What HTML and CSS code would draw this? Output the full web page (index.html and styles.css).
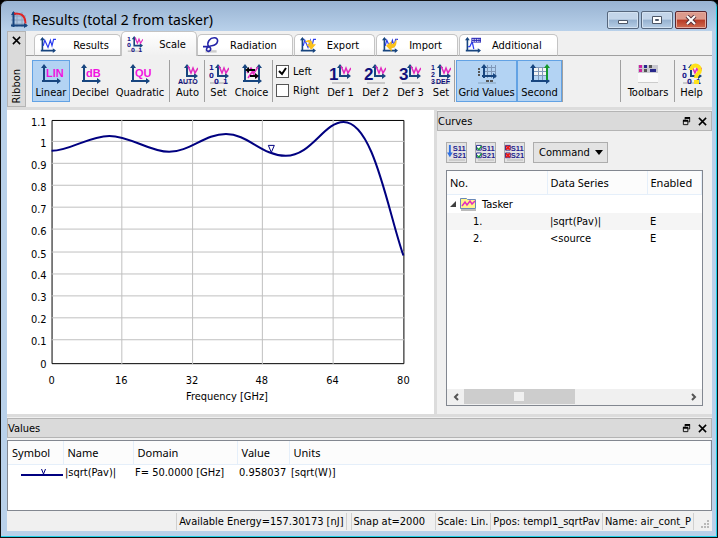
FILE: index.html
```html
<!DOCTYPE html>
<html lang="en">
<head>
    <meta charset="UTF-8">
    <meta name="viewport" content="width=device-width, initial-scale=1.0">
    <title>Results (total 2 from tasker)</title>
    <link rel="stylesheet" href="styles.css">
</head>
<body>
    <svg class="defs" aria-hidden="true">
        <defs>
            <!-- shared axes with arrow heads -->
            <symbol id="axes" viewBox="0 0 20 20">
                <path d="M3 18V2M1 17h17" stroke="#17457f" stroke-width="2" fill="none"/>
                <path d="M3 0L0 4h6zM20 17l-4-3v6z" fill="#17457f"/>
            </symbol>
            <symbol id="mini" viewBox="0 0 20 20">
                <path d="M1 19h18" stroke="#c9c9c9" stroke-width="2"/>
                <path d="M9 13V2M8 12h10" stroke="#17457f" stroke-width="2" fill="none"/>
                <path d="M9 0L6 4h6zM20 12l-4-3v6z" fill="#17457f"/>
                <path d="M10 2l3 7 2-5 2 5 3-5" stroke="#e22bc0" stroke-width="1.5" fill="none"/>
            </symbol>
            <symbol id="scale" viewBox="0 0 20 20">
                <use href="#mini"/>
                <g fill="#20208c" font-family="DejaVu Sans" font-size="7" font-weight="bold"><text x="0" y="6">1</text><text x="0" y="14">0</text><text x="5" y="20">0</text><text x="14" y="20">1</text></g>
            </symbol>
            <symbol id="wave" viewBox="0 0 20 20">
                <use href="#axes"/>
                <path d="M4 11l2-7 4 9 3-9 2 7 2-8h3" stroke="#2a3cf0" stroke-width="1.5" fill="none"/>
            </symbol>
            <symbol id="float" viewBox="0 0 10 10">
                <path d="M3.5 3V1.5h5v4H7M1.5 4.5h5v4h-5z" stroke="#000" fill="none"/>
                <path d="M3 1h6M1 4h6" stroke="#000" stroke-width="2"/>
            </symbol>
            <symbol id="cross" viewBox="0 0 10 10">
                <path d="M1 1l8 8M9 1l-8 8" stroke="#000" stroke-width="1.7"/>
            </symbol>
            <symbol id="s-params" viewBox="0 0 20 18">
                <path d="M2 17h17" stroke="#ccc" stroke-width="2"/>
                <g fill="#24248f" font-family="Liberation Sans" font-size="8" font-weight="bold"><text x="6" y="7">S11</text><text x="6" y="15">S21</text></g>
            </symbol>
        </defs>
    </svg>

    <div class="window">
        <header class="titlebar">
            <svg class="app-icon" viewBox="0 0 18 18">
                <path d="M1 5h15M1 9h15M1 13h15M7 1v15M12 1v15" stroke="#8aa0bd"/>
                <path d="M3.5 1v15M1 14.5h16" stroke="#17457f" stroke-width="2"/>
                <path d="M3.5 0L1 4h5zM18 14.5L14 12v5z" fill="#17457f"/>
                <path d="M4 2.5c7 0 11 1 11.5 10" stroke="#e02424" stroke-width="2" fill="none"/>
            </svg>
            <h1>Results (total 2 from tasker)</h1>
            <div class="window-buttons">
                <button aria-label="Minimize"><svg viewBox="0 0 12 10"><path d="M1.5 5.5h9v3h-9z" fill="#fff" stroke="#4c5666"/></svg></button>
                <button aria-label="Maximize"><svg viewBox="0 0 12 10"><path d="M1.5 1.5h9v7h-9z" fill="#fff" stroke="#4c5666"/><path d="M4.5 4.5h3v1h-3z" fill="#8fabc8" stroke="#4c5666"/></svg></button>
                <button class="close" aria-label="Close"><svg viewBox="0 0 12 10"><path d="M2 1l8 8M10 1l-8 8" stroke="#57323a" stroke-width="4"/><path d="M2 1l8 8M10 1l-8 8" stroke="#fff" stroke-width="2"/></svg></button>
            </div>
        </header>

        <div class="content">
            <section class="ribbon">
                <div class="ribbon-handle">
                    <button aria-label="Close ribbon"><svg class="glyph"><use href="#cross"/></svg></button>
                    <span>Ribbon</span>
                </div>
                <div class="ribbon-body">
                    <nav class="tabs">
                        <button><svg><use href="#wave"/></svg><span>Results</span></button>
                        <button class="active"><svg><use href="#scale"/></svg><span>Scale</span></button>
                        <button class="wide"><svg viewBox="0 0 20 20"><path d="M3 18h14" stroke="#ccc" stroke-width="3"/><path d="M0 12h7C4 6 9 1 14 1c7 0 5 9-3 10-8 1-8 7-4 7 4-1 3-7-1-5" stroke="#2424a8" stroke-width="2" fill="none"/></svg><span>Radiation</span></button>
                        <button class="wide"><svg viewBox="0 0 20 20"><use href="#wave"/><path d="M6 6c5-4 9-3 10 3h4l-6 7-6-7h4c0-2-3-3-6-3z" fill="#fbc21c"/></svg><span>Export</span></button>
                        <button class="wide"><svg viewBox="0 0 20 20"><use href="#wave"/><path d="M18 2c1 7-1 12-6 12v4l-7-7 7-6v4c3 0 5-3 6-7z" fill="#fbc21c"/></svg><span>Import</span></button>
                        <button class="wide"><svg viewBox="0 0 20 20"><use href="#axes"/><path d="M4 12h2l3-6 2 9" stroke="#2a3cf0" stroke-width="1.5" fill="none"/><path d="M8 1h12v6h-12z" fill="#2c2cb8"/><path d="M9 3h10M9 5.5h10" stroke="#fff" stroke-dasharray="2 1"/></svg><span>Additional</span></button>
                    </nav>
                    <div class="tools">
                        <button class="on"><svg viewBox="0 0 20 20"><use href="#axes"/><text class="magenta" x="5" y="13">LIN</text></svg><span>Linear</span></button>
                        <button><svg viewBox="0 0 20 20"><use href="#axes"/><text class="magenta" x="5" y="13">dB</text></svg><span>Decibel</span></button>
                        <button><svg viewBox="0 0 20 20"><use href="#axes"/><text class="magenta" x="5" y="13">QU</text></svg><span>Quadratic</span></button>
                        <i class="sep"></i>
                        <button><svg viewBox="0 0 20 20"><use href="#mini"/><text class="navy tiny" x="0" y="20">AUTO</text></svg><span>Auto</span></button>
                        <i class="sep"></i>
                        <button><svg><use href="#scale"/></svg><span>Set</span></button>
                        <button><svg viewBox="0 0 20 20"><use href="#axes"/><path d="M17 16V3" stroke="#17457f" stroke-width="2"/><path d="M17 0l-3 4h6z" fill="#17457f"/><path d="M5 9l4-5 3 5 4-6M6 14l4-6 5 6" stroke="#e22bc0" stroke-width="1.5" fill="none"/><path d="M6 6h7M8 12h6" stroke="#000" stroke-width="2"/><path d="M3 6l4-3v6zM17 12l-4-3v6z"/></svg><span>Choice</span></button>
                        <i class="sep"></i>
                        <div class="checks">
                            <label><input type="checkbox" checked>Left</label>
                            <label><input type="checkbox">Right</label>
                        </div>
                        <button><svg viewBox="0 0 20 20"><use href="#mini"/><text class="navy" x="-2" y="16">1</text></svg><span>Def 1</span></button>
                        <button><svg viewBox="0 0 20 20"><use href="#mini"/><text class="navy" x="-2" y="16">2</text></svg><span>Def 2</span></button>
                        <button><svg viewBox="0 0 20 20"><use href="#mini"/><text class="navy" x="-2" y="16">3</text></svg><span>Def 3</span></button>
                        <button><svg viewBox="0 0 20 20"><use href="#mini"/><g class="navy tiny"><text x="0" y="6">1</text><text x="0" y="13">2</text><text x="0" y="20">3</text><text x="5" y="20">DEF</text></g></svg><span>Set</span></button>
                        <i class="sep"></i>
                        <button class="on"><svg viewBox="0 0 20 20"><path d="M1 19h18" stroke="#9dbbd8" stroke-width="2"/><path d="M6 3.5h13M6 7.5h13M10.5 1v13M14.5 1v13M18.5 1v13" stroke="#8098b8"/><path d="M7 14V2M5 12h13" stroke="#17457f" stroke-width="2"/><path d="M7 0L4 4h6zM20 12l-4-3v6z" fill="#17457f"/><path d="M1 5h2M1 8h2M1 11h2M9 17h3M13 17h3" stroke="#555" stroke-width="2"/></svg><span>Grid Values</span></button>
                        <button class="on"><svg viewBox="0 0 20 20"><path d="M4 3.5h13v8H4M4 7.5h13M8.5 3v13M12.5 3v13" stroke="#8098b8" fill="#f4f4f4"/><use href="#axes"/><path d="M17 16V4" stroke="#149a2c" stroke-width="2"/><path d="M17 0l-3 4h6z" fill="#149a2c"/></svg><span>Second</span></button>
                        <i class="sep"></i>
                        <span></span>
                        <i class="sep"></i>
                        <button><svg viewBox="0 0 20 20"><path d="M0 1h20v8H0z" fill="#c8c8d0"/><path d="M0 9h20v10H0z" fill="#fafafa"/><path d="M0 18.5h20" stroke="#ccc"/><path d="M1 2.5h3M1 6.5h3" stroke="#d020a0" stroke-width="3"/><path d="M6 2.5h3M12 6.5h6" stroke="#28288c" stroke-width="3"/><path d="M11 2.5h3M6 6.5h3" stroke="#555" stroke-width="3"/></svg><span>Toolbars</span></button>
                        <i class="sep"></i>
                        <button><svg viewBox="0 0 20 20"><use href="#scale"/><path d="M9 6c0-6 9-6 9 0 0 4-4 3-4 8" stroke="#ffe11a" stroke-width="4" fill="none"/><path d="M12 16h5v4h-5z" fill="#ffe11a"/></svg><span>Help</span></button>
                    </div>
                </div>
            </section>

            <main class="workspace">
                <section class="plot">
                    <svg viewBox="0 0 427 305" role="img" aria-label="|sqrt(Pav)| against frequency">
                        <path class="frame" d="M44.5 10.5h353v244h-353z"/>
                        <path class="grid" d="M44 31.5h354M44 53.5h354M44 75.5h354M44 97.5h354M44 119.5h354M44 142.5h354M44 164.5h354M44 186.5h354M44 208.5h354M44 230.5h354M114.5 10v245M185.5 10v245M255.5 10v245M326.5 10v245"/>
                        <path class="curve" d="M44 41C63 41 81 26 102 26C123 26 142 42 162 42S198 24 219 24C241 24 255 46 279 46C305 46 317 12 337 12C367 12 381 100 397 146"/>
                        <path class="marker" d="M261.5 35.5h6l-3 7z"/>
                        <g class="y-labels">
                            <text x="39" y="16">1.1</text>
                            <text x="39" y="37">1</text>
                            <text x="39" y="59">0.9</text>
                            <text x="39" y="81">0.8</text>
                            <text x="39" y="103">0.7</text>
                            <text x="39" y="125">0.6</text>
                            <text x="39" y="148">0.5</text>
                            <text x="39" y="170">0.4</text>
                            <text x="39" y="192">0.3</text>
                            <text x="39" y="214">0.2</text>
                            <text x="39" y="236">0.1</text>
                            <text x="39" y="259">0</text>
                        </g>
                        <g class="x-labels">
                            <text x="44" y="275">0</text>
                            <text x="114" y="275">16</text>
                            <text x="185" y="275">32</text>
                            <text x="255" y="275">48</text>
                            <text x="326" y="275">64</text>
                            <text x="397" y="275">80</text>
                            <text x="220" y="291">Frequency [GHz]</text>
                        </g>
                    </svg>
                </section>

                <aside class="curves">
                    <div class="dock-title">
                        <h2>Curves</h2>
                        <button aria-label="Float curves"><svg class="glyph"><use href="#float"/></svg></button>
                        <button aria-label="Close curves"><svg class="glyph"><use href="#cross"/></svg></button>
                    </div>
                    <div class="curves-body">
                        <div class="curve-tools">
                            <button class="square" aria-label="Sort"><svg viewBox="0 0 20 18"><use href="#s-params"/><path d="M3 1v9" stroke="#2f6fe0" stroke-width="2"/><path d="M0 9h6l-3 5z" fill="#2f6fe0"/></svg></button>
                            <button class="square" aria-label="Enable all"><svg viewBox="0 0 20 18"><use href="#s-params"/><path d="M.5 1.5h5v5h-5zM.5 9.5h5v5h-5z" fill="#fff" stroke="#24248f"/><path d="M1 4l2 2 3-4M1 12l2 2 3-4" stroke="#1c9c3c" stroke-width="1.5" fill="none"/></svg></button>
                            <button class="square" aria-label="Disable all"><svg viewBox="0 0 20 18"><use href="#s-params"/><path d="M.5 1.5h5v5h-5zM.5 9.5h5v5h-5z" fill="#fff" stroke="#24248f"/><path d="M1 2l4 4M5 2L1 6M1 10l4 4M5 10l-4 4" stroke="#e81818" stroke-width="2"/></svg></button>
                            <button class="command">Command <svg viewBox="0 0 8 5"><path d="M0 0h8L4 5z"/></svg></button>
                        </div>
                        <div class="tree">
                            <table>
                                <thead>
                                    <tr><th>No.</th><th>Data Series</th><th>Enabled</th></tr>
                                </thead>
                                <tbody>
                                    <tr class="group"><td colspan="3"><svg class="arrow" viewBox="0 0 6 6"><path d="M6 0v6H0z" fill="#404040"/></svg><svg class="folder" viewBox="0 0 16 14"><path d="M1 13h15" stroke="#bbb" stroke-width="2"/><path d="M.5 11.5v-10h6l1 1h8v9z" fill="#fff48c" stroke="#6888b8"/><path d="M2 9l3-4 2 3 3-4 2 3 3-3" stroke="#e22bc0" stroke-width="1.5" fill="none"/></svg>Tasker</td></tr>
                                    <tr class="alt"><td>1.</td><td>|sqrt(Pav)|</td><td>E</td></tr>
                                    <tr><td>2.</td><td>&lt;source</td><td>E</td></tr>
                                </tbody>
                            </table>
                            <div class="scrollbar">
                                <button aria-label="Scroll left"><svg viewBox="0 0 6 8"><path d="M5 1L2 4l3 3"/></svg></button>
                                <div class="track"><div class="thumb"></div></div>
                                <button aria-label="Scroll right"><svg viewBox="0 0 6 8"><path d="M1 1l3 3-3 3"/></svg></button>
                            </div>
                        </div>
                    </div>
                </aside>
            </main>

            <section class="values">
                <div class="dock-title">
                    <h2>Values</h2>
                    <button aria-label="Float values"><svg class="glyph"><use href="#float"/></svg></button>
                    <button aria-label="Close values"><svg class="glyph"><use href="#cross"/></svg></button>
                </div>
                <div class="values-box">
                    <table>
                        <thead>
                            <tr><th>Symbol</th><th>Name</th><th>Domain</th><th>Value</th><th>Units</th></tr>
                        </thead>
                        <tbody>
                            <tr>
                                <td><svg class="symbol" viewBox="0 0 42 8"><path d="M0 6h42" stroke="#000080" stroke-width="2"/><path d="M20.5 0l2 5 2-5" stroke="#000080" fill="none"/></svg></td>
                                <td>|sqrt(Pav)|</td>
                                <td>F= 50.0000 [GHz]</td>
                                <td>0.958037</td>
                                <td>[sqrt(W)]</td>
                            </tr>
                        </tbody>
                    </table>
                </div>
            </section>

            <footer class="statusbar">
                <span class="energy">Available Energy=157.30173 [nJ]</span>
                <span class="snap">Snap at=2000</span>
                <span>Scale: Lin.</span>
                <span>Ppos: templ1_sqrtPav</span>
                <span>Name: air_cont_P</span>
                <svg class="grip" viewBox="0 0 8 8"><path d="M6 1h2M3 4h2M6 4h2M0 7h2M3 7h2M6 7h2" stroke="#b8b8b8" stroke-width="2"/></svg>
            </footer>
        </div>
    </div>
</body>
</html>
```

FILE: styles.css
```css
* {
    box-sizing: border-box;
}
body {
    margin: 0;
    background-color: #000;
    font-family: "DejaVu Sans Condensed", "Noto Sans", sans-serif;
    font-size: 11px;
    color: #000;
}
button {
    font: inherit;
    color: inherit;
    padding: 0;
    border: none;
    background: none;
}
h1, h2 {
    margin: 0;
    font-weight: normal;
}
svg {
    display: block;
    flex: none;
}
.defs {
    position: absolute;
    width: 0;
    height: 0;
}
.window {
    display: flex;
    flex-direction: column;
    height: 100vh;
    padding: 0 5px 6px 6px;
    border: 1px solid #111;
    border-radius: 7px 7px 0 0;
    background: #b9d1ea linear-gradient(#98b3d2, #b9d1ea 30px);
    box-shadow: inset -1px -1px #20d0e8;
}
.titlebar {
    display: flex;
    align-items: center;
    gap: 4px;
    height: 30px;
    padding: 8px 5px 0 3px;
}
.titlebar h1 {
    flex: 1;
    font-family: "Noto Sans", sans-serif;
    font-size: 14px;
    line-height: 20px;
}
.app-icon {
    width: 18px;
    height: 18px;
}
.window-buttons {
    display: flex;
    gap: 2px;
}
.window-buttons button {
    display: grid;
    place-items: center;
    width: 32px;
    height: 18px;
    border: 1px solid #56677d;
    border-radius: 2px;
    background: linear-gradient(#c3d5e9 45%, #95b1cf 50%, #b7cee6);
    box-shadow: inset 0 0 0 1px #d3e2f1;
}
.window-buttons .close {
    border-color: #5a2730;
    background: linear-gradient(#dc9a8c 45%, #b83a25 50%, #cf6b50);
    box-shadow: inset 0 0 0 1px #e5aca0;
}
.window-buttons svg {
    width: 12px;
    height: 10px;
}
.content {
    flex: 1;
    display: flex;
    flex-direction: column;
    min-height: 0;
    background-color: #f0f0f0;
}
.glyph {
    width: 9px;
    height: 9px;
}

/* ribbon */
.ribbon {
    display: flex;
    height: 79px;
    border-bottom: 3px solid #dcdcdc;
}
.ribbon-handle {
    display: flex;
    flex-direction: column;
    justify-content: space-between;
    align-items: center;
    width: 19px;
    padding: 4px 0 2px;
    border: 1px solid #b4b4b4;
    background-color: #dadada;
}
.ribbon-handle span {
    writing-mode: vertical-rl;
    transform: rotate(180deg);
}
.ribbon-body {
    flex: 1;
}
.tabs {
    display: flex;
    align-items: flex-end;
    height: 25px;
    padding-left: 8px;
    background: linear-gradient(#a0a0a0, #a0a0a0) bottom / 100% 1px no-repeat;
}
.tabs button {
    display: flex;
    align-items: center;
    width: 87px;
    height: 22px;
    padding: 0 5px;
    border: 1px solid #c4c4c4;
    border-bottom-color: #a0a0a0;
    border-radius: 5px 5px 0 0;
    background: linear-gradient(#fff 60%, #f6f6f6);
}
.tabs .wide {
    width: auto;
    margin-right: 1px;
    padding-right: 15px;
}
.tabs .active {
    width: 76px;
    height: 25px;
    border-bottom: none;
    background: linear-gradient(#fff, #f0f0f0);
}
.tabs svg {
    width: 16px;
    height: 16px;
}
.tabs span {
    flex: 1;
    padding-left: 11px;
}
.tools {
    display: grid;
    grid-template-columns: 38px 41px 58px 2px 33px 2px 25px 41px 2px 49px 35px 35px 35px 26px 2px 61px 45px 2px 1fr 2px 52px 2px 31px;
    height: 42px;
    margin: 4px 5px 0 6px;
}
.tools button {
    display: flex;
    flex-direction: column;
    align-items: center;
    gap: 1px;
    padding-top: 3px;
    border: 1px solid transparent;
    white-space: nowrap;
}
.tools button span {
    line-height: 16px;
}
.tools .on {
    border-color: #62a2e4;
    background-color: #b3d3f3;
}
.tools svg {
    width: 20px;
    height: 20px;
    overflow: visible;
}
.sep {
    width: 1px;
    background-color: #a0a0a0;
}
.magenta {
    fill: #f012e0;
    font: bold 11px "Liberation Sans", sans-serif;
}
.navy {
    fill: #10107c;
    font: bold 17px "Liberation Sans", sans-serif;
}
.tiny {
    font-size: 7px;
}
.checks {
    display: flex;
    flex-direction: column;
    gap: 5px;
    padding: 4px 0 0 2px;
}
.checks label {
    display: flex;
    align-items: center;
    gap: 4px;
    height: 14px;
}
.checks input {
    appearance: none;
    width: 13px;
    height: 13px;
    margin: 0;
    border: 1px solid #555;
    background-color: #fff;
}
.checks input:checked {
    background: #fff url("data:image/svg+xml,%3Csvg xmlns='http://www.w3.org/2000/svg' viewBox='0 0 11 11'%3E%3Cpath d='M2 5l3 3 4-6' stroke='%23000' stroke-width='2' fill='none'/%3E%3C/svg%3E");
}

/* plot and curves */
.workspace {
    flex: 1;
    display: grid;
    grid-template-columns: minmax(0, 1fr) 275px;
    min-height: 0;
    border-bottom: 3px solid #dcdcdc;
}
.plot {
    min-height: 0;
    border-right: 3px solid #dcdcdc;
    background-color: #fff;
}
.plot svg {
    width: 100%;
    height: 100%;
}
.frame {
    fill: none;
    stroke: #000;
}
.grid {
    stroke: #c0c0c0;
}
.curve {
    fill: none;
    stroke: #000080;
    stroke-width: 2;
}
.marker {
    fill: #fff;
    stroke: #000080;
}
.y-labels {
    text-anchor: end;
}
.x-labels {
    text-anchor: middle;
}
.curves {
    display: flex;
    flex-direction: column;
    padding-top: 1px;
}
.dock-title {
    display: flex;
    align-items: center;
    gap: 7px;
    height: 20px;
    padding: 0 4px 0 0;
    border: 1px solid #b4b4b4;
    background-color: #dadada;
}
.dock-title h2 {
    flex: 1;
    font-size: 11px;
}
.curves-body {
    flex: 1;
    display: flex;
    flex-direction: column;
    gap: 7px;
    padding: 11px 9px 8px;
}
.curve-tools {
    display: flex;
    gap: 8px;
}
.curve-tools button {
    height: 21px;
    border: 1px solid #adadad;
    background-color: #e3e3e3;
}
.square {
    width: 21px;
}
.square svg {
    width: 19px;
    height: 17px;
}
.curve-tools .command {
    display: flex;
    align-items: center;
    gap: 5px;
    padding: 0 4px 0 5px;
}
.command svg {
    width: 8px;
    height: 5px;
}
.tree {
    flex: 1;
    display: flex;
    flex-direction: column;
    justify-content: space-between;
    border: 1px solid #828790;
    background-color: #fff;
}
table {
    width: 100%;
    table-layout: fixed;
    border-collapse: collapse;
}
th {
    height: 23px;
    padding: 0 4px;
    border-right: 1px solid #e5effa;
    border-bottom: 1px solid #e5effa;
    background-color: #fcfcfc;
    font-family: "Noto Sans", sans-serif;
    font-weight: normal;
    text-align: left;
}
td {
    height: 17px;
    padding: 0 4px;
    white-space: nowrap;
}
.tree th {
    width: 100px;
    padding: 0 3px;
}
.tree th:last-child {
    width: auto;
}
.tree td {
    padding: 0 3px;
}
.tree td:first-child {
    padding-left: 26px;
}
.tree .group td {
    display: flex;
    align-items: center;
    height: 18px;
    padding: 1px 0 0 3px;
}
.arrow {
    width: 6px;
    height: 6px;
}
.folder {
    width: 16px;
    height: 14px;
    margin: 0 6px 0 4px;
}
.alt {
    background-color: #f5f5f5;
}
.scrollbar {
    display: flex;
    height: 16px;
    background-color: #f0f0f0;
}
.scrollbar button {
    display: grid;
    place-items: center;
    width: 17px;
}
.scrollbar svg {
    width: 6px;
    height: 8px;
    fill: none;
    stroke: #555;
    stroke-width: 2;
}
.track {
    flex: 1;
}
.thumb {
    width: 50%;
    height: 15px;
    background: linear-gradient(#f0f0f0, #f0f0f0) center / 10px 9px no-repeat #cdcdcd;
}

/* values */
.values {
    padding-top: 1px;
}
.values .dock-title {
    margin-bottom: 2px;
}
.values-box {
    height: 71px;
    border: 1px solid #828790;
    background-color: #fff;
}
.values th:nth-child(1) {
    width: 55px;
}
.values th:nth-child(2) {
    width: 70px;
}
.values th:nth-child(3) {
    width: 104px;
}
.values th:nth-child(4) {
    width: 52px;
}
.values td {
    padding: 0 2px;
}
.values td:first-child {
    padding: 0;
}
.symbol {
    width: 42px;
    height: 8px;
    margin-left: auto;
}

/* status bar */
.statusbar {
    display: flex;
    justify-content: flex-end;
    align-items: center;
    height: 20px;
    padding-right: 3px;
}
.statusbar span {
    height: 17px;
    padding: 0 2px;
    border-left: 1px solid #d0d0d0;
    line-height: 17px;
    white-space: nowrap;
}
.statusbar .energy {
    margin-right: 4px;
    border-right: 1px solid #d0d0d0;
}
.statusbar .snap {
    width: 84px;
}
.statusbar span:nth-child(5) {
    border-right: 1px solid #d0d0d0;
}
.grip {
    align-self: flex-end;
    width: 8px;
    height: 8px;
    margin: 0 0 3px 7px;
}
```
